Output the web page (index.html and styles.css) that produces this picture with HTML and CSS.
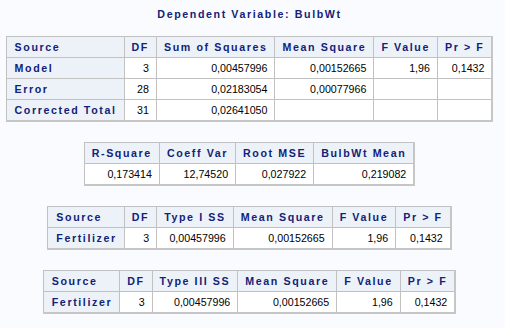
FILE: index.html
```html
<!DOCTYPE html>
<html>
<head>
<meta charset="utf-8">
<link rel="stylesheet" href="styles.css">
</head>
<body>
<div class="page">
  <div class="title">Dependent Variable: BulbWt</div>

  <table class="t">
    <tr><th class="ch rh">Source</th><th class="ch">DF</th><th class="ch">Sum of Squares</th><th class="ch">Mean Square</th><th class="ch">F Value</th><th class="ch">Pr &gt; F</th></tr>
    <tr><th class="rh">Model</th><td>3</td><td>0,00457996</td><td>0,00152665</td><td>1,96</td><td>0,1432</td></tr>
    <tr><th class="rh">Error</th><td>28</td><td>0,02183054</td><td>0,00077966</td><td></td><td></td></tr>
    <tr><th class="rh">Corrected Total</th><td>31</td><td>0,02641050</td><td></td><td></td><td></td></tr>
  </table>

  <table class="t">
    <tr><th class="ch">R-Square</th><th class="ch">Coeff Var</th><th class="ch">Root MSE</th><th class="ch">BulbWt Mean</th></tr>
    <tr><td>0,173414</td><td>12,74520</td><td>0,027922</td><td>0,219082</td></tr>
  </table>

  <table class="t">
    <tr><th class="ch rh">Source</th><th class="ch">DF</th><th class="ch">Type I SS</th><th class="ch">Mean Square</th><th class="ch">F Value</th><th class="ch">Pr &gt; F</th></tr>
    <tr><th class="rh">Fertilizer</th><td>3</td><td>0,00457996</td><td>0,00152665</td><td>1,96</td><td>0,1432</td></tr>
  </table>

  <table class="t">
    <tr><th class="ch rh">Source</th><th class="ch">DF</th><th class="ch">Type III SS</th><th class="ch">Mean Square</th><th class="ch">F Value</th><th class="ch">Pr &gt; F</th></tr>
    <tr><th class="rh">Fertilizer</th><td>3</td><td>0,00457996</td><td>0,00152665</td><td>1,96</td><td>0,1432</td></tr>
  </table>
</div>
</body>
</html>
```

FILE: styles.css
```css
html, body {
  margin: 0;
  padding: 0;
  background: #fafbfe;
}
body {
  font-family: "Liberation Sans", Arial, sans-serif;
  font-size: 10.67px;
  color: #000;
}
.page {
  width: 499px;
  display: flex;
  flex-direction: column;
  align-items: center;
  padding-top: 8px;
}
.title {
  font-weight: bold;
  color: #112277;
  letter-spacing: 1.6px;
  line-height: 12px;
  margin-bottom: 16px;
}
.t {
  border-collapse: collapse;
  background: #fff;
  border-right: 2px solid #c6c6c6;
  border-bottom: 2px solid #c6c6c6;
  margin-bottom: 20px;
}
.t th, .t td {
  border: 1px solid #c1c1c1;
  height: 20px;
  padding: 0 7px 0 7px;
  line-height: 12px;
  white-space: nowrap;
}
.t th {
  background: #edf2f9;
  color: #112277;
  font-weight: bold;
  letter-spacing: 1.6px;
}
.t th.ch {
  text-align: center;
}
.t th.rh {
  text-align: left;
  padding-left: 8px;
}
.t td {
  text-align: right;
}
```
